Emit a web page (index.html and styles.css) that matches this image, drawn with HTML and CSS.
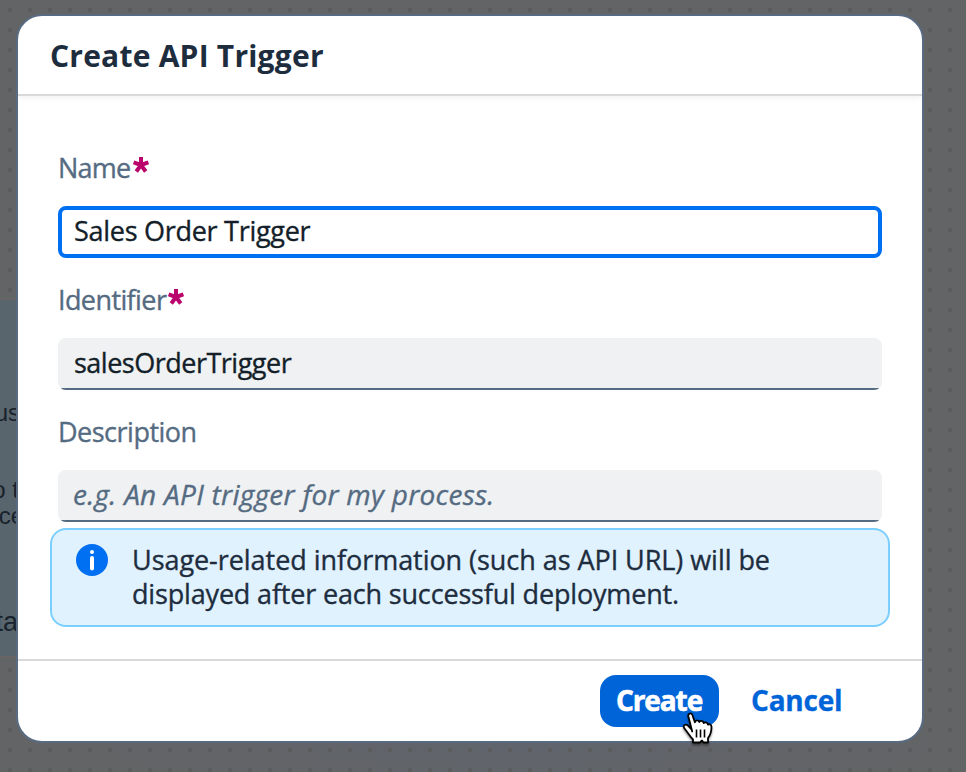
FILE: index.html
```html
<!DOCTYPE html>
<html lang="en">
<head>
<meta charset="utf-8">
<title>Create API Trigger</title>
<link rel="stylesheet" href="styles.css">
</head>
<body>
<div class="canvas">
  <aside class="node">
    <span class="frag frag-a">us</span>
    <span class="frag frag-b">o t</span>
    <span class="frag frag-c">ce</span>
    <span class="frag frag-d">ta</span>
  </aside>
  <section class="dialog" role="dialog">
    <header class="head"><h1><span class="fit title">Create API Trigger</span></h1></header>
    <main class="body">
      <div class="label"><span class="fit l-name">Name</span><svg class="req" viewBox="0 0 16 16"><path d="M8 8V0M8 8L.6 5.4M8 8l7.4-2.6M8 8l-4.7 6.5M8 8l4.7 6.5"/></svg></div>
      <div class="input focus"><span class="fit i-name">Sales Order Trigger</span></div>
      <div class="label"><span class="fit l-id">Identifier</span><svg class="req" viewBox="0 0 16 16"><path d="M8 8V0M8 8L.6 5.4M8 8l7.4-2.6M8 8l-4.7 6.5M8 8l4.7 6.5"/></svg></div>
      <div class="input"><span class="fit i-id">salesOrderTrigger</span></div>
      <div class="label"><span class="fit l-desc">Description</span></div>
      <div class="input placeholder"><span class="fit i-desc">e.g. An API trigger for my process.</span></div>
      <div class="strip">
        <svg class="info" viewBox="0 0 32 32"><circle cx="16" cy="16" r="16" fill="#0070f2"/><circle cx="16" cy="8" r="2" fill="#fff"/><path d="M16 14v10.500" stroke="#fff" stroke-width="4" stroke-linecap="round"/></svg>
        <p><span class="fit t-one">Usage-related information (such as API URL) will be</span><br><span class="fit t-two">displayed after each successful deployment.</span></p>
      </div>
    </main>
    <footer class="foot">
      <button class="btn primary"><span class="fit b-create">Create</span></button>
      <button class="btn"><span class="fit b-cancel">Cancel</span></button>
    </footer>
  </section>
  <svg class="cursor" viewBox="0 0 32 36"><path d="M10.200 21.500L7.700 11.800L6.300 6.200C5.700 3.500 9.300 2.200 10.400 5L12.900 12.200C13.500 9.800 16.700 9.800 17.300 12C18.300 10.200 21.300 10.600 21.700 13C23 11.700 25.500 12.300 25.900 14.600C27.500 13.700 29.500 14.500 29.500 17C29.500 23 28.500 25 26 28V32.500H21.500L20 30.500L18 32.500H11V29.500C8 26.500 5.500 22 2.500 18.500C.2 15.700 3.500 13.300 6 15.700L9.200 19" fill="#fff" stroke="#000" stroke-width="1.800" stroke-linejoin="round" stroke-linecap="round"/><path d="M14.500 19.500v8M18.500 19.500v8M22.500 19.500v8" stroke="#000" stroke-width="1.600"/></svg>
</div>
</body>
</html>
```

FILE: styles.css
```css
* { box-sizing: border-box; }
body { margin: 0; font-family: "Open Sans", sans-serif; color: #1d2d3e; }
.canvas {
  position: relative;
  width: 966px;
  height: 772px;
  padding: 14px 0 0 16px;
  overflow: hidden;
  background:
    conic-gradient(from 270deg at 4px 4px, #5b5c5e 90deg, transparent 0) 8px 8px / 20px 20px,
    radial-gradient(ellipse 420px 60px at 520px 740px, #5f646c, transparent),
    #636466;
}
.node {
  position: absolute;
  left: 0;
  top: 299px;
  width: 18px;
  height: 358px;
  overflow: hidden;
  background: #59656d;
  border-top: 1px solid #6b6462;
  border-bottom: 1px solid #6b6462;
  color: #18222c;
  font: 24px/28px "Liberation Sans", sans-serif;
}
.frag { position: absolute; right: -2px; white-space: nowrap; }
.frag-a { top: 99px; }
.frag-b { top: 176px; right: -1px; }
.frag-c { top: 202px; right: -6px; }
.frag-d { top: 308px; right: 0; font-size: 27px; }
.dialog {
  position: relative;
  display: flex;
  flex-direction: column;
  width: 908px;
  height: 729px;
  border: 2px solid #596b80;
  border-radius: 26px;
  background: #fff;
  overflow: hidden;
}
.head {
  height: 80px;
  padding-left: 32px;
  border-bottom: 2px solid #d9d9d9;
  box-shadow: 0 2px 6px #0000000f;
}
h1 { margin: 0; font-size: 30px; line-height: 79px; font-weight: 700; }
.fit { white-space: nowrap; }
.title { letter-spacing: .22px; }
.l-name { letter-spacing: -.75px; }
.i-name { letter-spacing: -.28px; }
.l-id { letter-spacing: -.6px; }
.i-id { letter-spacing: -.5px; }
.l-desc { letter-spacing: -.5px; }
.i-desc { letter-spacing: .27px; font-size: 28px; }
.t-one { letter-spacing: -.05px; }
.t-two { letter-spacing: -.17px; }
.b-create { letter-spacing: -1.1px; -webkit-text-stroke: .6px #fff; }
.b-cancel { letter-spacing: -.2px; -webkit-text-stroke: .3px #0064d9; }
.body { flex: 1; padding: 48px 32px 0; -webkit-text-stroke: .35px currentColor; }
.label {
  display: flex;
  height: 48px;
  margin: 0 8px 14px;
  color: #556b82;
  font-size: 27px;
  line-height: 48px;
}
.req { width: 16px; height: 16px; margin: 13px 0 0 2px; fill: none; stroke: #ba066c; stroke-width: 4; }
.input {
  height: 52px;
  margin: 0 8px 18px;
  padding-left: 16px;
  border-radius: 8px;
  background: linear-gradient(#556b82, #556b82) bottom / 100% 2px no-repeat #eff1f2;
  color: #131e29;
  font-size: 27px;
  line-height: 50px;
}
.focus { border: 4px solid #0070f2; padding-left: 12px; background: #fff; line-height: 42px; }
.placeholder { margin-bottom: 6px; padding-left: 15px; font-style: italic; color: #556b82; line-height: 48px; }
.strip {
  display: flex;
  gap: 24px;
  height: 99px;
  padding: 14px 24px;
  border: 2px solid #7bcfff;
  border-radius: 16px;
  background: #e1f2ff;
}
.info { width: 32px; height: 32px; }
.strip p { margin: -1px 0 0; font-size: 27px; line-height: 34px; }
.foot {
  display: flex;
  gap: 16px;
  justify-content: flex-end;
  height: 82px;
  padding: 14px 68px 0;
  border-top: 2px solid #d9d9d9;
}
.btn {
  width: 119px;
  height: 52px;
  padding: 0 0 2px 16px;
  border: 0;
  border-radius: 16px;
  background: none;
  color: #0064d9;
  font: 700 28px/50px "Open Sans", sans-serif;
  text-align: left;
}
.primary { background: #0064d9; color: #fff; }
.cursor { position: absolute; left: 682px; top: 710px; width: 32px; height: 36px; filter: drop-shadow(0 2px 1px #0006); }
```
